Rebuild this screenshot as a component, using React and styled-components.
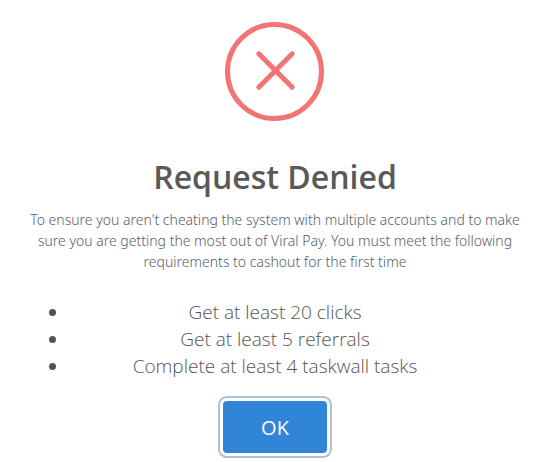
import React from 'react'
import styled, { createGlobalStyle } from 'styled-components'

const requirements = [
    'Get at least 20 clicks',
    'Get at least 5 referrals',
    'Complete at least 4 taskwall tasks',
]

const App = () => {

    return (
        <>
            <GlobalStyle />
            <Popup role="dialog" aria-labelledby="popup-title" aria-describedby="popup-text">
                <ErrorIcon viewBox="0 0 100 100" aria-hidden="true">
                    <circle cx="49.5" cy="49.5" r="47" />
                    <path d="M33.8 31.8L67.2 65.2M67.2 31.8L33.8 65.2" />
                </ErrorIcon>
                <Title id="popup-title">Request Denied</Title>
                <Message id="popup-text">
                    To ensure you aren't cheating the system with multiple accounts and to make
                    sure you are getting the most out of Viral Pay. You must meet the following
                    requirements to cashout for the first time
                </Message>
                <Requirements>
                    {
                        requirements.map(item => <li key={item}>{item}</li>)
                    }
                </Requirements>
                <ConfirmButton type="button">OK</ConfirmButton>
            </Popup>
        </>
    )

}

const GlobalStyle = createGlobalStyle`
    * {
        box-sizing: border-box;
    }
    body {
        margin: 0;
        background: #fff;
        font-family: "Open Sans", "Noto Sans", sans-serif;
    }
`

const Popup = styled.main`
    display: flex;
    flex-direction: column;
    align-items: center;
    padding: 22px 8px 5px 22px;
    text-align: center;
`

const ErrorIcon = styled.svg`
    width: 100px;
    height: 100px;
    fill: none;
    stroke: #f27474;
    stroke-width: 5;
    stroke-linecap: round;
`

const Title = styled.h2`
    margin: 31px 0 9px;
    color: #595959;
    font-size: 32px;
    font-weight: 600;
    line-height: 47px;
`

const Message = styled.p`
    margin: 0;
    color: #56606c;
    font-family: "Noto Sans", "Open Sans", sans-serif;
    font-size: 14px;
    font-weight: 300;
    line-height: 21px;
`

const Requirements = styled.ul`
    align-self: stretch;
    margin: 27px 0 21px;
    padding: 0 47px;
    color: #545454;
    font-size: 19px;
    font-weight: 300;
    line-height: 27px;
`

const ConfirmButton = styled.button`
    padding: 0 38px;
    height: 52px;
    border: none;
    border-radius: 4px;
    background: #3085d6;
    color: #fff;
    font-family: inherit;
    font-size: 20px;
    cursor: pointer;
    box-shadow: 0 0 0 3px #fff, 0 0 0 5px #abc1d8;
`

export default App
